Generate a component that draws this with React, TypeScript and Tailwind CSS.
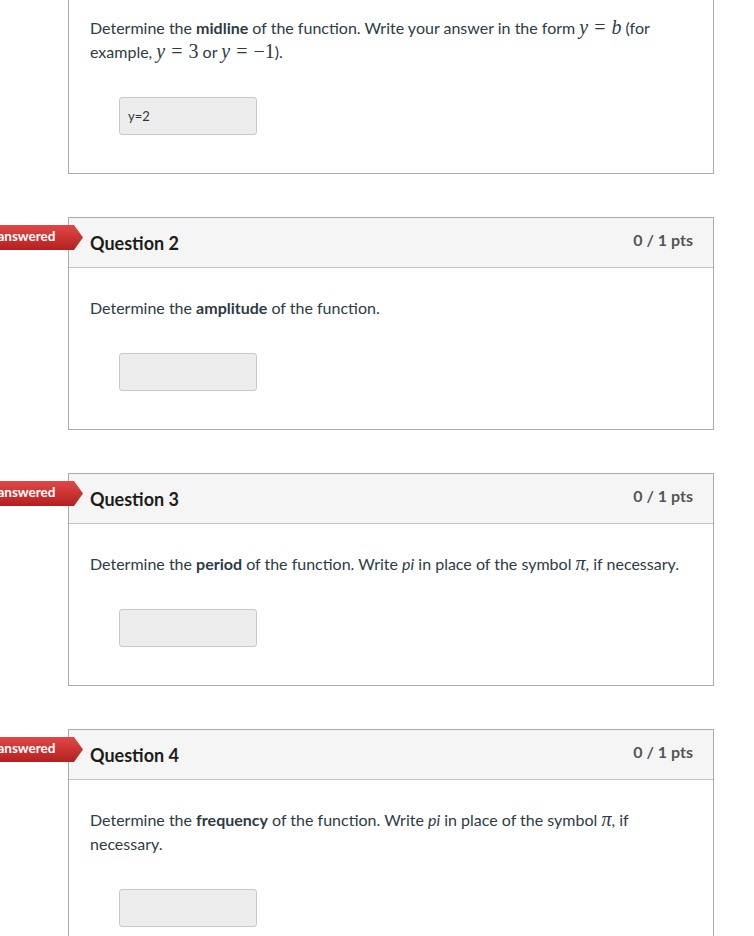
import React from "react";

const M = ({ children }: { children: React.ReactNode }) => (
  <span className="font-['Liberation_Serif',serif] text-[20px] italic leading-[20px]">{children}</span>
);
const N = ({ children }: { children: React.ReactNode }) => (
  <span className="font-['Liberation_Serif',serif] text-[20px] leading-[20px]">{children}</span>
);
const Eq = () => (
  <span className="mx-[6px] font-['Liberation_Serif',serif] text-[20px] leading-[20px]">=</span>
);

function Badge() {
  return (
    <div className="absolute left-[-95px] top-[7px] h-[25px] w-[109px] bg-linear-to-b from-[#e04848] to-[#b41f1f] [clip-path:polygon(0_0,calc(100%-9px)_0,100%_50%,calc(100%-9px)_100%,0_100%)] pl-[6px] text-[13.5px] font-bold leading-[23px] text-white">
      Unanswered
    </div>
  );
}

function Input({ value }: { value?: string }) {
  return (
    <div className="ml-[29px] mt-[33px] h-[38px] w-[138px] rounded-[3px] border border-[#c8c8c8] bg-[#ededed] px-[8px] text-[13px] leading-[36px] text-[#333]">
      {value}
    </div>
  );
}

function Question({ n, children }: { n: number; children: React.ReactNode }) {
  return (
    <div className="relative mt-[43px] border border-[#ababab]">
      <Badge />
      <div className="flex h-[50px] items-center justify-between border-b border-[#c4c4c4] bg-[#f5f5f5] pl-[21px] pr-[20px]">
        <div className="pt-[1px] text-[18px] font-bold leading-[24px] text-[#1c1c1c]">Question {n}</div>
        <div className="mb-[6px] text-[16px] font-bold leading-[20px] text-[#555]">0 / 1 pts</div>
      </div>
      <div className="pl-[21px] pr-[21px] pt-[28px] pb-[38px]">{children}</div>
    </div>
  );
}

export default function App() {
  return (
    <div className="min-h-[936px] overflow-hidden bg-white font-['Lato',sans-serif] text-[16px] leading-[24px] text-[#2d3b45]">
      <div className="ml-[68px] w-[646px]">
        <div className="mt-[-14px] border border-[#ababab] pl-[21px] pr-[21px] pt-[29px] pb-[38px]">
          <p>
            Determine the <b>midline</b> of the function. Write your answer in the form <M>y</M>
            <Eq />
            <M>b</M> (for example, <M>y</M>
            <Eq />
            <N>3</N> or <M>y</M>
            <Eq />
            <N>−1</N>).
          </p>
          <Input value="y=2" />
        </div>
        <Question n={2}>
          <p>
            Determine the <b>amplitude</b> of the function.
          </p>
          <Input />
        </Question>
        <Question n={3}>
          <p>
            Determine the <b>period</b> of the function. Write <i>pi</i> in place of the symbol <M>π</M>, if necessary.
          </p>
          <Input />
        </Question>
        <Question n={4}>
          <p>
            Determine the <b>frequency</b> of the function. Write <i>pi</i> in place of the symbol <M>π</M>, if
            necessary.
          </p>
          <Input />
        </Question>
      </div>
    </div>
  );
}
